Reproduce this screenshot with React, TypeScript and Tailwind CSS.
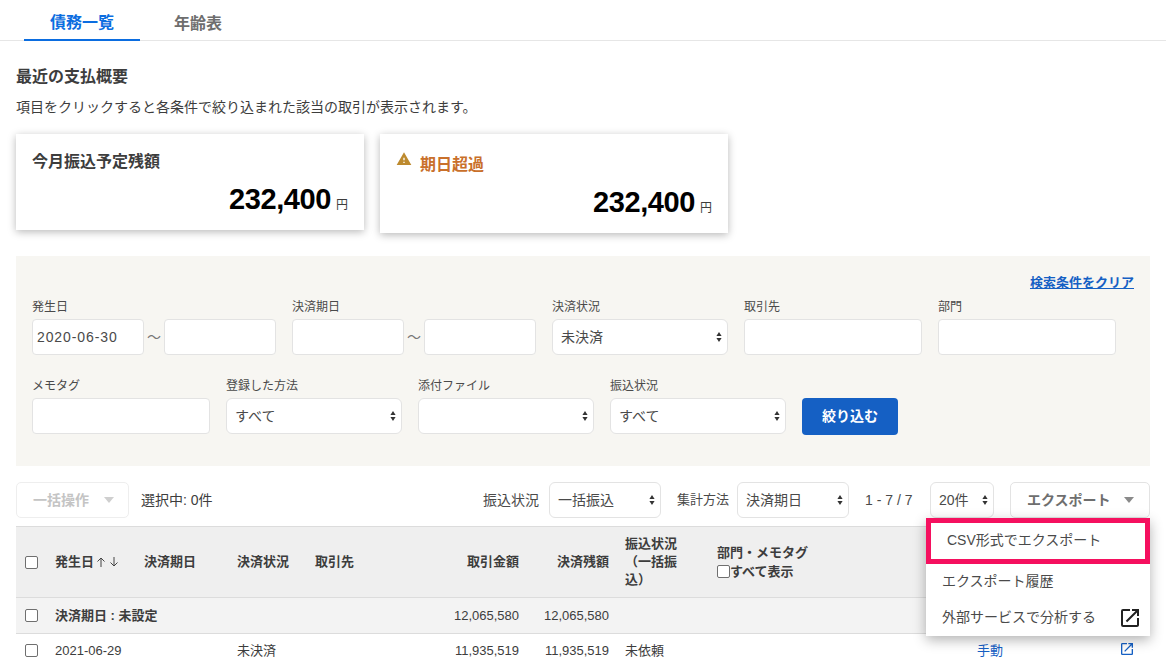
import { MdOpenInNew, MdWarning } from 'react-icons/md';

const FONT = 'font-["Liberation_Sans","Noto_Sans_CJK_JP",sans-serif]';

function TextField({ label, value, width }: { label?: string; value?: string; width: string }) {
  return (
    <div className={width}>
      {label && <div className="mb-[5px] h-[14px] text-[12px] leading-[14px] text-[#4a4a4a]">{label}</div>}
      <input
        readOnly
        value={value ?? ''}
        className="h-[36px] w-full rounded-[4px] border border-[#e3e3e3] bg-white pl-[4px] text-[14px] tracking-[0.9px] text-[#4a4a4a] outline-none"
      />
    </div>
  );
}

function Stepper() {
  return (
    <svg width="6" height="12" viewBox="0 0 6 12" className="absolute top-1/2 right-[5px] -translate-y-1/2 fill-[#333]">
      <path d="M3 1 L5.6 5 H0.4 Z M3 11 L0.4 7 H5.6 Z" />
    </svg>
  );
}

function Select({ label, value, width }: { label?: string; value?: string; width: string }) {
  return (
    <div className={width}>
      {label && <div className="mb-[5px] h-[14px] text-[12px] leading-[14px] text-[#4a4a4a]">{label}</div>}
      <div className="relative h-[36px] rounded-[6px] border border-[#e3e3e3] bg-white pl-[8px] text-[14px] leading-[34px] text-[#4a4a4a]">
        {value}
        <Stepper />
      </div>
    </div>
  );
}

function Caret({ color }: { color: string }) {
  return (
    <svg width="10" height="6" viewBox="0 0 10 6" className={color}>
      <path d="M0 0 H10 L5 6 Z" />
    </svg>
  );
}

function Checkbox() {
  return <input type="checkbox" className="m-0 h-[13px] w-[13px] appearance-none rounded-[2px] border border-[#6f6f6f] bg-white" />;
}

function SortArrows() {
  return (
    <svg width="24" height="12" viewBox="0 0 24 12" className="ml-[2px] fill-none stroke-[#444]" strokeWidth="1">
      <path d="M5 11 V2 M1.5 5.5 L5 2 L8.5 5.5" />
      <path d="M18 1 V10 M14.5 6.5 L18 10 L21.5 6.5" />
    </svg>
  );
}

function AmountCard({ title, warn, tall }: { title: string; warn?: boolean; tall?: boolean }) {
  return (
    <div className={`w-[348px] bg-white pr-[16px] pl-[16px] shadow-[0_2px_8px_rgba(0,0,0,0.28)] ${tall ? 'h-[99px] pt-[21px]' : 'h-[96px] pt-[18px]'}`}>
      <div className="flex h-[20px] items-start">
        {warn && <MdWarning size={16} className="mt-[-4px] mr-[8px] text-[#bd8a2e]" />}
        <span className={`text-[16px] leading-[20px] font-bold ${warn ? 'text-[#c9702b]' : 'text-[#3d3d3d]'}`}>{title}</span>
      </div>
      <div className="mt-[11px] flex items-baseline justify-end">
        <span className="text-[29px] leading-[32px] font-bold tracking-[-0.4px] text-black">232,400</span>
        <span className="ml-[5px] text-[12px] text-[#3d3d3d]">円</span>
      </div>
    </div>
  );
}

const cols = 'grid grid-cols-[39px_89px_93px_78px_104px_100px_90px_108px_260px_144px_1fr]';

export default function App() {
  return (
    <div className={`h-[669px] w-[1166px] overflow-hidden bg-white ${FONT}`}>
      <div className="flex h-[41px] border-b border-[#e6e6e6] pl-[24px]">
        <div className="flex h-[41px] w-[116px] items-center justify-center border-b-[2px] border-[#0b6de0] pt-[6px] text-[16px] font-bold text-[#0b6de0]">
          債務一覧
        </div>
        <div className="ml-[34px] flex h-[40px] items-center pt-[8px] text-[16px] font-bold text-[#6e6e6e]">年齢表</div>
      </div>

      <div className="px-[16px]">
        <h2 className="mt-[26px] text-[16px] leading-[20px] font-bold text-[#3d3d3d]">最近の支払概要</h2>
        <p className="mt-[10px] text-[14px] leading-[20px] text-[#3d3d3d]">
          項目をクリックすると各条件で絞り込まれた該当の取引が表示されます。
        </p>

        <div className="mt-[17px] flex h-[99px] items-start gap-[16px]">
          <AmountCard title="今月振込予定残額" />
          <AmountCard title="期日超過" warn tall />
        </div>

        <div className="mt-[23px] h-[210px] bg-[#f7f6f2] px-[16px] pt-[19px]">
          <div className="flex justify-end">
            <a className="text-[13px] leading-[16px] font-bold text-[#1560c4] underline">検索条件をクリア</a>
          </div>
          <div className="mt-[9px] flex items-end">
            <TextField label="発生日" value="2020-06-30" width="w-[112px]" />
            <span className="flex h-[36px] w-[20px] items-center justify-center text-[14px] text-[#777]">〜</span>
            <TextField width="w-[112px]" />
            <div className="w-[16px]" />
            <TextField label="決済期日" width="w-[112px]" />
            <span className="flex h-[36px] w-[20px] items-center justify-center text-[14px] text-[#777]">〜</span>
            <TextField width="w-[112px]" />
            <div className="w-[16px]" />
            <Select label="決済状況" value="未決済" width="w-[176px]" />
            <div className="w-[16px]" />
            <TextField label="取引先" width="w-[178px]" />
            <div className="w-[16px]" />
            <TextField label="部門" width="w-[178px]" />
          </div>
          <div className="mt-[24px] flex items-start gap-[16px]">
            <TextField label="メモタグ" width="w-[178px]" />
            <Select label="登録した方法" value="すべて" width="w-[176px]" />
            <Select label="添付ファイル" width="w-[176px]" />
            <Select label="振込状況" value="すべて" width="w-[176px]" />
            <button className="mt-[19px] h-[37px] w-[96px] rounded-[4px] bg-[#1560c4] text-[14px] font-bold text-white">絞り込む</button>
          </div>
        </div>

        <div className="mt-[16px] flex h-[36px] items-center">
          <div className="flex h-[36px] w-[113px] items-center justify-between rounded-[5px] border border-[#eeeeee] pr-[14px] pl-[16px] text-[14px] font-bold text-[#c4c4c4]">
            一括操作
            <Caret color="fill-[#cfcfcf]" />
          </div>
          <span className="ml-[12px] text-[14px] text-[#3d3d3d]">選択中: 0件</span>
          <div className="flex-1" />
          <span className="mr-[10px] text-[14px] text-[#4a4a4a]">振込状況</span>
          <Select value="一括振込" width="w-[112px]" />
          <span className="mr-[8px] ml-[16px] text-[13px] text-[#4a4a4a]">集計方法</span>
          <Select value="決済期日" width="w-[112px]" />
          <span className="mx-[16px] w-[49px] text-[14px] whitespace-nowrap text-[#4a4a4a]">1 - 7 / 7</span>
          <Select value="20件" width="w-[64px]" />
          <div className="relative ml-[16px] w-[140px]">
            <div className="flex h-[36px] items-center justify-between rounded-[5px] border border-[#e3e3e3] pr-[15px] pl-[16px] text-[14px] font-bold text-[#6e6e6e]">
              エクスポート
              <Caret color="fill-[#8a8a8a]" />
            </div>
            <div className="absolute top-full right-0 z-10 w-[224px] bg-white text-[14px] text-[#4a4a4a] shadow-[0_4px_12px_rgba(0,0,0,0.3)]">
              <div className="flex h-[46px] items-center border-[5px] border-[#f5105f] pb-[2px] pl-[16px]">CSV形式でエクスポート</div>
              <div className="flex h-[36px] items-center pb-[2px] pl-[16px]">エクスポート履歴</div>
              <div className="flex h-[36px] items-center justify-between pr-[8px] pl-[16px]">
                <span className="pb-[2px]">外部サービスで分析する</span>
                <MdOpenInNew size={24} className="text-[#222]" />
              </div>
            </div>
          </div>
        </div>

        <div className="mt-[8px] text-[13px] text-[#3d3d3d]">
          <div className={`${cols} h-[72px] items-center border-y border-[#dcdcdc] bg-[#efefef] font-bold`}>
            <div className="pl-[9px] leading-[0]"><Checkbox /></div>
            <div className="flex items-center">
              発生日
              <SortArrows />
            </div>
            <div>決済期日</div>
            <div>決済状況</div>
            <div>取引先</div>
            <div className="text-right">取引金額</div>
            <div className="text-right">決済残額</div>
            <div className="box-content w-[56px] pl-[16px] leading-[18px]">振込状況（一括振込）</div>
            <div className="leading-[19px]">
              部門・メモタグ
              <div className="flex items-center"><Checkbox />すべて表示</div>
            </div>
          </div>
          <div className={`${cols} h-[36px] items-center border-b border-[#dcdcdc] bg-[#f3f3f3]`}>
            <div className="pl-[9px] leading-[0]"><Checkbox /></div>
            <div className="col-span-4 font-bold">決済期日 : 未設定</div>
            <div className="text-right">12,065,580</div>
            <div className="text-right">12,065,580</div>
          </div>
          <div className={`${cols} h-[33px] items-center`}>
            <div className="pl-[9px] leading-[0]"><Checkbox /></div>
            <div>2021-06-29</div>
            <div />
            <div>未決済</div>
            <div />
            <div className="text-right">11,935,519</div>
            <div className="text-right">11,935,519</div>
            <div className="pl-[16px]">未依頼</div>
            <div />
            <div className="text-[#1560c4]">手動</div>
            <div className="ml-[-2px] mt-[-4px]"><MdOpenInNew size={16} className="text-[#1560c4]" /></div>
          </div>
        </div>
      </div>
    </div>
  );
}
